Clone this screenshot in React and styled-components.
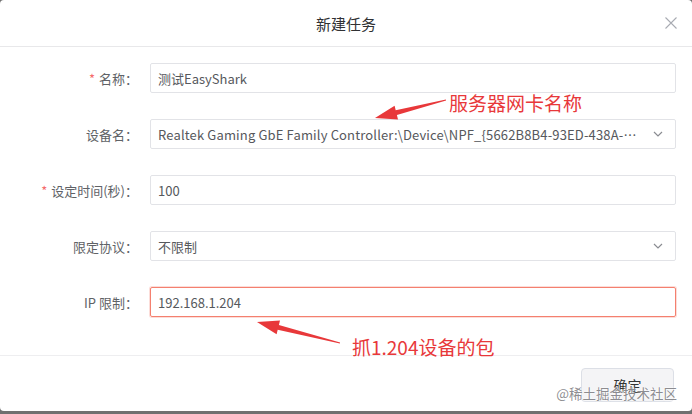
import React from "react";
import styled, { createGlobalStyle } from "styled-components";

const GlobalStyle = createGlobalStyle`
  html, body {
    margin: 0;
    padding: 0;
    background: #707070;
  }
  body {
    font-family: "Noto Sans CJK SC", "Noto Sans", sans-serif;
  }
`;

const Dialog = styled.div`
  position: relative;
  width: 692px;
  height: 411px;
  background: #fff;
  border-radius: 4px;
  display: flex;
  flex-direction: column;
  overflow: hidden;
`;

const Header = styled.div`
  height: 46px;
  flex: none;
  display: flex;
  align-items: center;
  justify-content: center;
  border-bottom: 1px solid #e8e8ea;
  position: relative;
`;

const Title = styled.div`
  font-size: 15px;
  color: #303133;
`;

const Close = styled.button`
  position: absolute;
  right: 14px;
  top: 16px;
  width: 14px;
  height: 14px;
  padding: 0;
  border: 0;
  background: none;
  display: flex;
`;

const Form = styled.div`
  flex: 1;
  display: flex;
  flex-direction: column;
  gap: 26px;
  padding: 16px 16px 0 0;
  border-bottom: 1px solid #eeeef0;
`;

const Row = styled.div`
  display: grid;
  grid-template-columns: 138px 1fr;
  column-gap: 12px;
  align-items: center;
`;

const Label = styled.label`
  text-align: right;
  font-size: 13px;
  color: #606266;
  white-space: nowrap;
`;

const Star = styled.span`
  color: #f56c6c;
  margin-right: 4px;
`;

const Field = styled.div`
  height: 30px;
  box-sizing: border-box;
  border: 1px solid ${(p) => (p.$error ? "#f4806f" : "#e2e3e7")};
  box-shadow: ${(p) => (p.$error ? "0 0 0 1px rgba(245,120,105,0.25)" : "none")};
  border-radius: 2px;
  display: flex;
  align-items: center;
  padding: 0 12px 0 7px;
  font-size: 13px;
  color: #56585c;
  min-width: 0;
`;

const Value = styled.span`
  flex: 1;
  min-width: 0;
  overflow: hidden;
  white-space: nowrap;
  text-overflow: ellipsis;
  letter-spacing: ${(p) => (p.$wide ? "0.15px" : "0")};
`;

const Chevron = styled.span`
  flex: none;
  margin-left: 10px;
  display: flex;
  color: #8a8c91;
`;

const Footer = styled.div`
  height: 55px;
  box-sizing: border-box;
  flex: none;
  display: flex;
  justify-content: flex-end;
  align-items: flex-start;
  padding: 12px 18px 0 0;
`;

const Button = styled.button`
  width: 93px;
  height: 34px;
  border: 1px solid #dcdfe6;
  border-radius: 4px;
  background: #f4f4f6;
  font-family: inherit;
  font-size: 14px;
  color: #333;
`;

const Watermark = styled.div`
  position: absolute;
  right: 15px;
  bottom: 8px;
  font-size: 13.5px;
  color: rgba(120, 120, 125, 0.85);
  text-shadow: 0 0 2px #fff, 0 0 2px #fff;
  pointer-events: none;
`;

const Overlay = styled.svg`
  position: absolute;
  left: 0;
  top: 0;
  pointer-events: none;
`;

const Note = styled.span`
  position: absolute;
  left: ${(p) => p.$x}px;
  top: ${(p) => p.$y}px;
  font-size: 19px;
  line-height: 1;
  color: #e8383a;
  white-space: nowrap;
  pointer-events: none;
`;

const ChevronIcon = () => (
  <svg width="10" height="6" viewBox="0 0 10 6" fill="none">
    <path d="M1 1l4 4 4-4" stroke="currentColor" strokeWidth="1.2" />
  </svg>
);

const fields = [
  { label: "名称：", required: true, value: "测试EasyShark" },
  {
    label: "设备名：",
    value:
      "Realtek Gaming GbE Family Controller:\\Device\\NPF_{5662B8B4-93ED-438A-9C2F-1B4E7A0D55C3}",
    select: true,
    wide: true,
  },
  { label: "设定时间(秒)：", required: true, value: "100" },
  { label: "限定协议：", value: "不限制", select: true },
  { label: "IP 限制：", value: "192.168.1.204", error: true },
];

export default function App() {
  return (
    <>
      <GlobalStyle />
      <Dialog>
        <Header>
          <Title>新建任务</Title>
          <Close aria-label="close">
            <svg width="14" height="14" viewBox="0 0 14 14">
              <path d="M1.5 1.5l11 11M12.5 1.5l-11 11" stroke="#a8abb2" strokeWidth="1.1" />
            </svg>
          </Close>
        </Header>
        <Form>
          {fields.map((f) => (
            <Row key={f.label}>
              <Label>
                {f.required && <Star>*</Star>}
                {f.label}
              </Label>
              <Field $error={f.error}>
                <Value $wide={f.wide}>{f.value}</Value>
                {f.select && (
                  <Chevron>
                    <ChevronIcon />
                  </Chevron>
                )}
              </Field>
            </Row>
          ))}
        </Form>
        <Footer>
          <Button>确定</Button>
        </Footer>
        <Watermark>@稀土掘金技术社区</Watermark>

        <Overlay width="692" height="411" viewBox="0 0 692 411">
          <polygon
            fill="#e8383a"
            points="375,118 398,119.4 396.9,115 446.1,100.5 445.9,99.5 395.7,110.2 394.6,105.8"
          />
          <polygon
            fill="#e8383a"
            points="257,322 276.6,334.2 277.7,329.8 339.9,343.5 340.1,342.5 278.9,325 280,320.6"
          />
        </Overlay>
        <Note $x={449} $y={93}>服务器网卡名称</Note>
        <Note $x={352} $y={337}>抓1.204设备的包</Note>
      </Dialog>
    </>
  );
}
